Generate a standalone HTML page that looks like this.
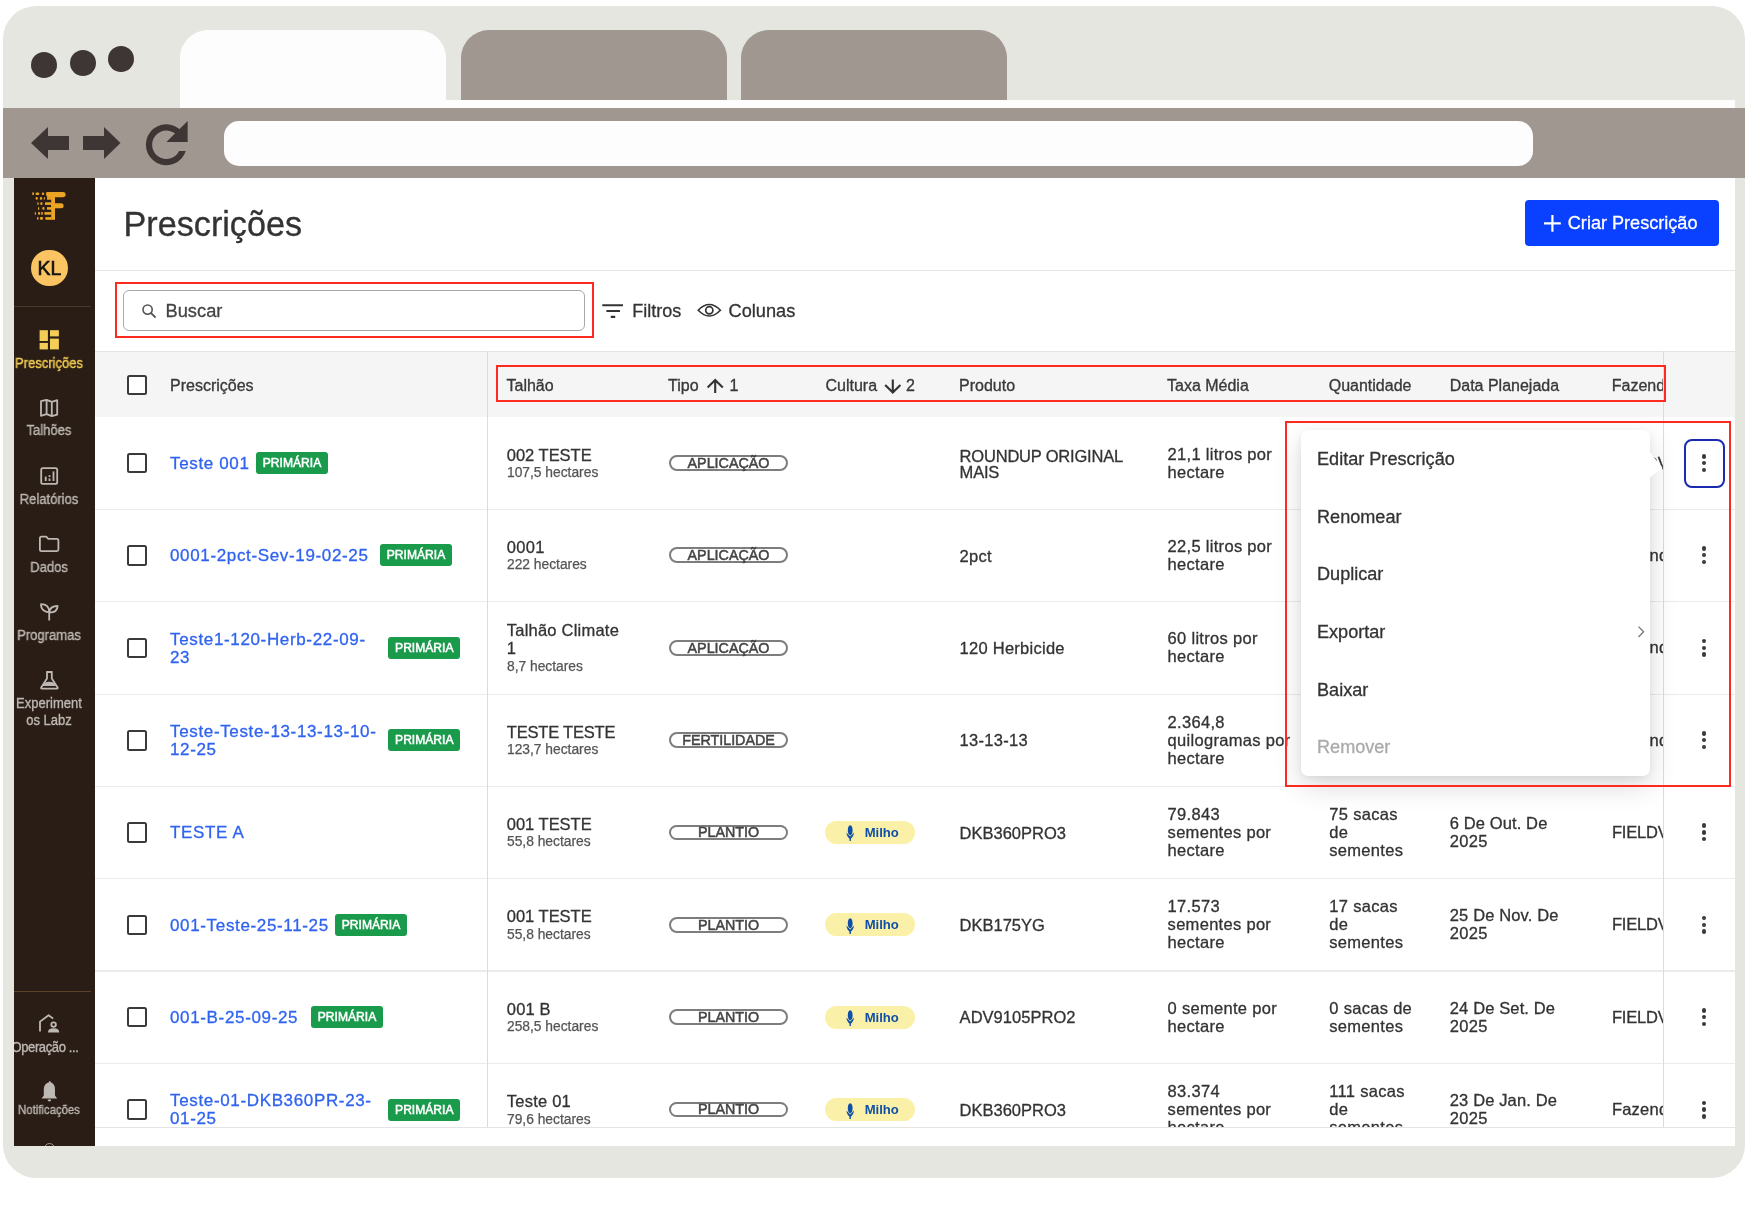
<!DOCTYPE html>
<html><head><meta charset="utf-8">
<style>
*{box-sizing:border-box;margin:0;padding:0}
html,body{width:1748px;height:1206px;overflow:hidden;background:#fff}
body{position:relative;font-family:"Liberation Sans",sans-serif;color:#333}
.a{position:absolute}
.frame{left:3px;top:6px;width:1742px;height:1172px;background:#e6e6e0;border-radius:33px}
.dot{width:26px;height:26px;border-radius:50%;background:#3e3535}
.tab{top:30px;width:266px;height:70px;background:#a19791;border-radius:28px 28px 0 0}
.toolbar{left:3px;top:108px;width:1742px;height:70px;background:#a19791}
.addr{left:224px;top:120.5px;width:1309px;height:45px;background:#fdfdfd;border-radius:15px}
.side{left:14px;top:178px;width:81px;height:968px;background:#2a1d15}
.main{left:95px;top:178px;width:1640px;height:968px;background:#fff}
.t{position:absolute;white-space:nowrap}
.red{position:absolute;border:2.2px solid #ff2a1f}
.cb{position:absolute;width:20.5px;height:20.5px;border:2.2px solid #3a3a3a;border-radius:2.5px;background:#fff}
.badge{position:absolute;height:22px;width:72px;background:#1a9b4b;border-radius:3px;color:#fff;font-size:12.1px;line-height:22.6px;text-align:center;-webkit-text-stroke:0.5px #fff}
.pill{position:absolute;left:669px;width:119.5px;height:15.8px;border:2px solid #7d7d7d;border-radius:8px}
.milho{position:absolute;left:825.4px;width:89.3px;height:23px;background:#fbf0a8;border-radius:12px}
.hl{position:absolute;height:1px;background:#e8e8e8}
.vl{position:absolute;width:1.3px;background:#dcdcdc}
.kb{position:absolute;width:4.4px;height:4.4px;border-radius:50%;background:#3a3a3a}
</style></head><body>
<div id="wrap" style="position:absolute;left:0;top:0;width:1748px;height:1206px;will-change:transform"><div class="a frame"></div>
<div class="a dot" style="left:30.6px;top:52px"></div>
<div class="a dot" style="left:69.6px;top:49.5px"></div>
<div class="a dot" style="left:107.7px;top:46px"></div>
<div class="a tab" style="left:180px;height:78px;background:#fdfdfd"></div>
<div class="a tab" style="left:461px"></div>
<div class="a tab" style="left:741px"></div>
<div class="a" style="left:180px;top:100px;width:1555px;height:78px;background:#fdfdfd"></div>
<div class="a toolbar"></div>
<svg class="a" style="left:0;top:100px" width="220" height="80" viewBox="0 100 220 80">
  <path d="M31 143 L48 127 L48 136 L69 136 L69 150 L48 150 L48 159 Z" fill="#3e3535"/>
  <path d="M120.5 143 L104 127 L104 136 L83 136 L83 150 L104 150 L104 159 Z" fill="#3e3535"/>
  <path d="M185.8 151 A20.45 20.45 0 1 1 182.0 131.6 L177.27 135.59 A14.25 14.25 0 1 0 179.15 151 Z" fill="#3e3535"/>
  <path d="M166.4 141.9 L187.65 120.9 L187.65 141.9 Z" fill="#3e3535"/>
</svg>
<div class="a addr"></div>
<div class="a side"></div>
<svg class="a" style="left:0;top:0" width="100" height="240" viewBox="0 0 100 240">
<g fill="#eba424">
<rect x="51.2" y="192" width="3.8" height="27.8"/>
<rect x="46.2" y="192" width="19.4" height="5.2" rx="2.6"/>
<rect x="51.2" y="203.2" width="12.4" height="5" rx="2.5"/>
<rect x="46.2" y="192.2" width="6" height="2.8"/>
<rect x="32.3" y="192.4" width="1.6" height="2.6"/>
<rect x="35.6" y="192.4" width="3.6" height="2.6" rx="1"/>
<rect x="41.8" y="192.4" width="2.4" height="2.6" rx="1"/>
<rect x="35.6" y="197.1" width="2.2" height="2.6" rx="1"/>
<rect x="39.8" y="197.1" width="2.4" height="2.6" rx="1"/>
<rect x="43.8" y="197.3" width="1.2" height="2.2"/>
<rect x="47" y="197.1" width="5" height="2.6"/>
<rect x="37.4" y="202.3" width="1.2" height="2.6"/>
<rect x="40.3" y="202.3" width="2.2" height="2.6" rx="1"/>
<rect x="45" y="202.3" width="7" height="2.6"/>
<rect x="38" y="207.3" width="1.2" height="2.4"/>
<rect x="42.3" y="207.1" width="2.2" height="2.6" rx="1"/>
<rect x="47" y="207.1" width="5" height="2.6"/>
<rect x="34.8" y="212.3" width="1.2" height="2.4"/>
<rect x="38" y="212.1" width="2.2" height="2.6" rx="1"/>
<rect x="41.2" y="212.1" width="1.6" height="2.6"/>
<rect x="44.4" y="212.1" width="7" height="2.6"/>
<rect x="37" y="217.1" width="1.6" height="2.6" rx="0.8"/>
<rect x="40" y="217.1" width="3" height="2.6" rx="1"/>
<rect x="45.4" y="217.1" width="6" height="2.7"/>
</g></svg>
<div class="a" style="left:30.9px;top:249.6px;width:36.8px;height:36.8px;border-radius:50%;background:#fbc462"></div>
<div class="t" style="left:-250.70px;width:600px;text-align:center;top:259.09px;font-size:19.5px;line-height:19.5px;color:#111;font-weight:normal;-webkit-text-stroke:0.6px #111;">KL</div>
<div class="a" style="left:14px;top:306.3px;width:77px;height:1.2px;background:#4a3829"></div>
<div class="a" style="left:14px;top:990.8px;width:77px;height:1.2px;background:#5e412a"></div>
<svg class="a" style="left:0;top:0" width="100" height="1150" viewBox="0 0 100 1150">
<g fill="#f3cd55">
<rect x="39.6" y="330.2" width="8.3" height="10.8"/>
<rect x="39.6" y="342.9" width="8.3" height="6.5"/>
<rect x="50" y="330.2" width="8.9" height="6.2"/>
<rect x="50" y="338.6" width="8.9" height="10.8"/>
</g>
<g fill="none" stroke="#bdb8b3" stroke-width="1.8" stroke-linejoin="round">
<path d="M41 401.2 L46.6 399.8 L51.8 401.8 L57.2 400.2 L57.2 414.6 L51.8 416.2 L46.6 414.2 L41 415.8 Z M46.6 399.8 L46.6 414.2 M51.8 401.8 L51.8 416.2"/>
<rect x="41.2" y="468.1" width="16" height="15.7" rx="1.6"/>
<path d="M39.9 549.2 V538.3 Q39.9 536.7 41.5 536.7 H46.2 L48.3 538.9 H56.8 Q58.4 538.9 58.4 540.5 V549.6 Q58.4 551.1 56.8 551.1 H41.5 Q39.9 551.1 39.9 549.5 Z"/>
<path d="M49.2 620.6 V612.2 M49.2 612.2 C46.8 612.2 41 611 41 604.2 C45.6 604.2 49.2 606.2 49.2 612.2 M49.2 612.6 C49.6 608 52.6 606 57.6 606 C57.6 610.4 54.2 612.6 49.2 612.6"/>
<path d="M46.2 672 H52.6 M47 672 V678.6 L41.2 687.4 Q40.6 688.6 42 688.6 H56.8 Q58.2 688.6 57.6 687.4 L51.8 678.6 V672"/>
<path d="M40 1031.6 V1021.6 L48.6 1015.2 L53.2 1018.6"/>
<circle cx="53.6" cy="1024.6" r="2.3"/>
</g>
<g fill="#bdb8b3">
<rect x="44.8" y="476.6" width="1.8" height="4.4"/>
<rect x="48.6" y="475.2" width="1.8" height="1.8"/><rect x="48.6" y="478.4" width="1.8" height="2.6"/>
<rect x="52.6" y="471.4" width="1.8" height="9.6"/>
<path d="M44.4 683 Q49.2 680.4 54.2 683 L56 686 H42.4 Z"/>
<path d="M48 1032.4 Q48 1028.2 53.6 1028.2 Q59.2 1028.2 59.2 1032.4 Z"/>
<path d="M49 1082.2 Q49 1081 49.8 1081 Q50.6 1081 50.6 1082.2 Q55 1083.4 55 1089.6 V1095.6 L57.2 1098.4 H41.6 L43.8 1095.6 V1089.6 Q43.8 1083.4 49 1082.2 Z"/>
<path d="M47.6 1099.4 H51.2 Q51.2 1101.4 49.4 1101.4 Q47.6 1101.4 47.6 1099.4 Z"/>
</g>
</svg>
<div class="a" style="left:14px;top:1130px;width:81px;height:16px;overflow:hidden"><div class="a" style="left:29.5px;top:13.2px;width:11px;height:11px;border-radius:50%;border:1.3px solid #9d9892"></div></div>
<div class="t" style="left:-250.70px;width:600px;text-align:center;top:355.95px;font-size:14px;line-height:14px;color:#f3cd55;font-weight:normal;transform:scaleX(0.93);-webkit-text-stroke:0.35px currentColor;">Prescrições</div>
<div class="t" style="left:-250.70px;width:600px;text-align:center;top:423.45px;font-size:14px;line-height:14px;color:#bdb8b3;font-weight:normal;transform:scaleX(0.93);-webkit-text-stroke:0.35px currentColor;">Talhões</div>
<div class="t" style="left:-250.70px;width:600px;text-align:center;top:491.85px;font-size:14px;line-height:14px;color:#bdb8b3;font-weight:normal;transform:scaleX(0.93);-webkit-text-stroke:0.35px currentColor;">Relatórios</div>
<div class="t" style="left:-250.70px;width:600px;text-align:center;top:559.75px;font-size:14px;line-height:14px;color:#bdb8b3;font-weight:normal;transform:scaleX(0.93);-webkit-text-stroke:0.35px currentColor;">Dados</div>
<div class="t" style="left:-250.70px;width:600px;text-align:center;top:627.95px;font-size:14px;line-height:14px;color:#bdb8b3;font-weight:normal;transform:scaleX(0.93);-webkit-text-stroke:0.35px currentColor;">Programas</div>
<div class="t" style="left:-250.70px;width:600px;text-align:center;top:696.05px;font-size:14px;line-height:14px;color:#bdb8b3;font-weight:normal;transform:scaleX(0.93);-webkit-text-stroke:0.35px currentColor;">Experiment</div>
<div class="t" style="left:-250.70px;width:600px;text-align:center;top:713.15px;font-size:14px;line-height:14px;color:#bdb8b3;font-weight:normal;transform:scaleX(0.93);-webkit-text-stroke:0.35px currentColor;">os Labz</div>
<div class="a" style="left:14px;top:1030px;width:81px;height:40px;overflow:hidden">
<div class="t" style="left:-269.00px;width:600px;text-align:center;top:10.15px;font-size:14px;line-height:14px;color:#bdb8b3;font-weight:normal;letter-spacing:-0.4px;transform:scaleX(0.93);-webkit-text-stroke:0.35px currentColor;">Operação ...</div>
</div>
<div class="t" style="left:-250.70px;width:600px;text-align:center;top:1104.37px;font-size:12.2px;line-height:12.2px;color:#bdb8b3;font-weight:normal;transform:scaleX(0.93);-webkit-text-stroke:0.35px currentColor;">Notificações</div>
<div class="a main"></div>
<div class="t" style="left:123.50px;top:206.85px;font-size:34.2px;line-height:34.2px;color:#333;font-weight:normal;-webkit-text-stroke:0.35px #333;">Prescrições</div>
<div class="a" style="left:1524.5px;top:200.2px;width:194px;height:45.6px;background:#0a40ff;border-radius:4px"></div>
<svg class="a" style="left:1540px;top:211px" width="26" height="26" viewBox="0 0 26 26"><path d="M12.4 4 V20.7 M4 12.4 H20.8" stroke="#fff" stroke-width="2.2"/></svg>
<div class="t" style="left:1567.80px;top:214.48px;font-size:18.1px;line-height:18.1px;color:#fff;font-weight:normal;-webkit-text-stroke:0.3px #fff;">Criar Prescrição</div>
<div class="a hl" style="left:95px;top:269.5px;width:1640px;height:1.5px;background:#e6e6e6"></div>
<div class="red" style="left:115px;top:282px;width:479px;height:56px"></div>
<div class="a" style="left:123px;top:290.4px;width:462px;height:40.8px;border:1.5px solid #a9a9a9;border-radius:6px"></div>
<svg class="a" style="left:138px;top:300px" width="22" height="22" viewBox="0 0 22 22"><circle cx="9.6" cy="9.6" r="4.6" fill="none" stroke="#555" stroke-width="1.6"/><path d="M13 13 L17.6 17.6" stroke="#555" stroke-width="1.8"/></svg>
<div class="t" style="left:165.50px;top:301.91px;font-size:18.3px;line-height:18.3px;color:#444;font-weight:normal;-webkit-text-stroke:0.3px #444;">Buscar</div>
<svg class="a" style="left:600px;top:300px" width="28" height="22" viewBox="0 0 28 22"><path d="M2.3 5.3 H23 M6.4 11 H20 M10.8 16.9 H15.2" stroke="#333" stroke-width="2.1"/></svg>
<div class="t" style="left:632.20px;top:301.86px;font-size:18px;line-height:18px;color:#333;font-weight:normal;-webkit-text-stroke:0.3px #333;">Filtros</div>
<svg class="a" style="left:694px;top:298px" width="30" height="24" viewBox="0 0 30 24"><path d="M4.2 12.3 Q15.3 0.8 26.4 12.3 Q15.3 23.8 4.2 12.3 Z" fill="none" stroke="#333" stroke-width="1.6"/><circle cx="15.3" cy="12.3" r="3.6" fill="none" stroke="#333" stroke-width="1.7"/></svg>
<div class="t" style="left:728.50px;top:301.69px;font-size:18.2px;line-height:18.2px;color:#333;font-weight:normal;-webkit-text-stroke:0.3px #333;">Colunas</div>
<div class="a" style="left:95px;top:351px;width:1640px;height:777px;overflow:hidden">
<div class="a" style="left:0;top:0;width:1640px;height:66.30000000000001px;background:#f5f5f5;border-top:1.3px solid #e3e3e3"></div>
<div class="a hl" style="left:0;top:157.50px;width:1640px;background:#ebebeb;height:1.3px"></div>
<div class="a hl" style="left:0;top:250.10px;width:1640px;background:#ebebeb;height:1.3px"></div>
<div class="a hl" style="left:0;top:342.60px;width:1640px;background:#ebebeb;height:1.3px"></div>
<div class="a hl" style="left:0;top:434.80px;width:1640px;background:#ebebeb;height:1.3px"></div>
<div class="a hl" style="left:0;top:527.00px;width:1640px;background:#ebebeb;height:1.3px"></div>
<div class="a hl" style="left:0;top:619.40px;width:1640px;background:#ebebeb;height:1.3px"></div>
<div class="a hl" style="left:0;top:711.90px;width:1640px;background:#ebebeb;height:1.3px"></div>
<div class="a vl" style="left:392px;top:0;height:777px"></div>
<div class="a vl" style="left:1568.2px;top:0;height:777px"></div>
</div>
<div class="a" style="left:95px;top:1126.5px;width:1640px;height:1.5px;background:#e4e4e4"></div>
<div class="cb" style="left:126.6px;top:374.7px"></div>
<div class="t" style="left:170.00px;top:377.76px;font-size:16px;line-height:16px;color:#3a3a3a;font-weight:normal;-webkit-text-stroke:0.3px #333;">Prescrições</div>
<div class="t" style="left:506.50px;top:377.76px;font-size:16px;line-height:16px;color:#3a3a3a;font-weight:normal;-webkit-text-stroke:0.3px #333;">Talhão</div>
<div class="t" style="left:668.00px;top:377.76px;font-size:16px;line-height:16px;color:#3a3a3a;font-weight:normal;-webkit-text-stroke:0.3px #333;">Tipo</div>
<svg class="a" style="left:703px;top:374px" width="26" height="22" viewBox="0 0 26 22"><path d="M12.2 19 V6.4 M4.6 13.6 L12.2 6 L19.8 13.6" fill="none" stroke="#333" stroke-width="2.1"/></svg>
<div class="t" style="left:729.50px;top:377.76px;font-size:16px;line-height:16px;color:#3a3a3a;font-weight:normal;-webkit-text-stroke:0.3px #333;">1</div>
<div class="t" style="left:825.50px;top:377.76px;font-size:16px;line-height:16px;color:#3a3a3a;font-weight:normal;-webkit-text-stroke:0.3px #333;">Cultura</div>
<svg class="a" style="left:880px;top:374px" width="26" height="22" viewBox="0 0 26 22"><path d="M12.8 5.6 V18.2 M5.2 11 L12.8 18.6 L20.4 11" fill="none" stroke="#333" stroke-width="2.1"/></svg>
<div class="t" style="left:906.00px;top:377.76px;font-size:16px;line-height:16px;color:#3a3a3a;font-weight:normal;-webkit-text-stroke:0.3px #333;">2</div>
<div class="t" style="left:959.00px;top:377.76px;font-size:16px;line-height:16px;color:#3a3a3a;font-weight:normal;-webkit-text-stroke:0.3px #333;">Produto</div>
<div class="t" style="left:1167.00px;top:377.76px;font-size:16px;line-height:16px;color:#3a3a3a;font-weight:normal;-webkit-text-stroke:0.3px #333;">Taxa Média</div>
<div class="t" style="left:1328.70px;top:377.76px;font-size:16px;line-height:16px;color:#3a3a3a;font-weight:normal;-webkit-text-stroke:0.3px #333;">Quantidade</div>
<div class="t" style="left:1449.70px;top:377.76px;font-size:16px;line-height:16px;color:#3a3a3a;font-weight:normal;-webkit-text-stroke:0.3px #333;">Data Planejada</div>
<div class="a" style="left:1600px;top:360px;width:63.2px;height:50px;overflow:hidden">
<div class="t" style="left:11.80px;top:17.76px;font-size:16px;line-height:16px;color:#3a3a3a;font-weight:normal;-webkit-text-stroke:0.3px #333;">Fazenda</div>
</div>
<div class="a" style="left:95px;top:417px;width:1640px;height:710px;overflow:hidden">
<div class="cb" style="left:31.799999999999997px;top:35.95px"></div>
<div class="t" style="left:75.00px;top:38.06px;font-size:17.0px;line-height:17.0px;color:#2f63f0;font-weight:normal;letter-spacing:0.65px;-webkit-text-stroke:0.3px #2f63f0;">Teste 001</div>
<div class="badge" style="left:161px;top:35.15px">PRIMÁRIA</div>
<div class="t" style="left:411.80px;top:29.58px;font-size:16.5px;line-height:16.5px;color:#333333;font-weight:normal;letter-spacing:-0.013px;-webkit-text-stroke:0.3px #333;">002 TESTE</div>
<div class="t" style="left:412.00px;top:49.17px;font-size:13.8px;line-height:13.8px;color:#555;font-weight:normal;-webkit-text-stroke:0.25px #555;">107,5 hectares</div>
<div class="pill" style="left:573.8px;top:38.25px"></div>
<div class="t" style="left:333.50px;width:600px;text-align:center;top:39.05px;font-size:14.3px;line-height:14.3px;color:#444;font-weight:normal;-webkit-text-stroke:0.5px #444;">APLICAÇÃO</div>
<div class="t" style="left:864.60px;top:30.53px;font-size:16.5px;line-height:16.5px;color:#333333;font-weight:normal;letter-spacing:-0.2px;-webkit-text-stroke:0.3px #333;">ROUNDUP ORIGINAL</div>
<div class="t" style="left:864.60px;top:46.53px;font-size:16.5px;line-height:16.5px;color:#333333;font-weight:normal;letter-spacing:-0.2px;-webkit-text-stroke:0.3px #333;">MAIS</div>
<div class="t" style="left:1072.60px;top:28.78px;font-size:16.5px;line-height:16.5px;color:#333333;font-weight:normal;letter-spacing:0.3px;-webkit-text-stroke:0.3px #333;">21,1 litros por</div>
<div class="t" style="left:1072.60px;top:46.78px;font-size:16.5px;line-height:16.5px;color:#333333;font-weight:normal;letter-spacing:0.3px;-webkit-text-stroke:0.3px #333;">hectare</div>
<div class="t" style="left:1234.30px;top:28.78px;font-size:16.5px;line-height:16.5px;color:#333333;font-weight:normal;letter-spacing:0.3px;-webkit-text-stroke:0.3px #333;">21 litros por</div>
<div class="t" style="left:1234.30px;top:46.78px;font-size:16.5px;line-height:16.5px;color:#333333;font-weight:normal;letter-spacing:0.3px;-webkit-text-stroke:0.3px #333;">hectare</div>
<div class="t" style="left:1354.80px;top:28.78px;font-size:16.5px;line-height:16.5px;color:#333333;font-weight:normal;letter-spacing:0.133px;-webkit-text-stroke:0.3px #333;">15 De Set. De</div>
<div class="t" style="left:1354.80px;top:46.78px;font-size:16.5px;line-height:16.5px;color:#333333;font-weight:normal;letter-spacing:0.3px;-webkit-text-stroke:0.3px #333;">2025</div>
<div class="a" style="left:1505px;top:31.15px;width:63.3px;height:30px;overflow:hidden">
<div class="t" style="left:11.90px;top:6.63px;font-size:16.5px;line-height:16.5px;color:#333333;font-weight:normal;letter-spacing:-0.2px;-webkit-text-stroke:0.3px #333;">FIELDVIEW</div>
</div>
<div class="kb" style="left:1607.1px;top:37.15px"></div>
<div class="kb" style="left:1607.1px;top:43.95px"></div>
<div class="kb" style="left:1607.1px;top:50.75px"></div>
<div class="cb" style="left:31.799999999999997px;top:128.10px"></div>
<div class="t" style="left:75.00px;top:130.21px;font-size:17.0px;line-height:17.0px;color:#2f63f0;font-weight:normal;letter-spacing:0.65px;-webkit-text-stroke:0.3px #2f63f0;">0001-2pct-Sev-19-02-25</div>
<div class="badge" style="left:285px;top:127.30px">PRIMÁRIA</div>
<div class="t" style="left:411.80px;top:121.73px;font-size:16.5px;line-height:16.5px;color:#333333;font-weight:normal;letter-spacing:0.3px;-webkit-text-stroke:0.3px #333;">0001</div>
<div class="t" style="left:412.00px;top:141.32px;font-size:13.8px;line-height:13.8px;color:#555;font-weight:normal;-webkit-text-stroke:0.25px #555;">222 hectares</div>
<div class="pill" style="left:573.8px;top:130.40px"></div>
<div class="t" style="left:333.50px;width:600px;text-align:center;top:131.20px;font-size:14.3px;line-height:14.3px;color:#444;font-weight:normal;-webkit-text-stroke:0.5px #444;">APLICAÇÃO</div>
<div class="t" style="left:864.60px;top:130.53px;font-size:16.5px;line-height:16.5px;color:#333333;font-weight:normal;letter-spacing:0.3px;-webkit-text-stroke:0.3px #333;">2pct</div>
<div class="t" style="left:1072.60px;top:120.93px;font-size:16.5px;line-height:16.5px;color:#333333;font-weight:normal;letter-spacing:0.3px;-webkit-text-stroke:0.3px #333;">22,5 litros por</div>
<div class="t" style="left:1072.60px;top:138.93px;font-size:16.5px;line-height:16.5px;color:#333333;font-weight:normal;letter-spacing:0.3px;-webkit-text-stroke:0.3px #333;">hectare</div>
<div class="t" style="left:1234.30px;top:129.93px;font-size:16.5px;line-height:16.5px;color:#333333;font-weight:normal;letter-spacing:0.3px;-webkit-text-stroke:0.3px #333;">22 litros</div>
<div class="t" style="left:1354.80px;top:120.93px;font-size:16.5px;line-height:16.5px;color:#333333;font-weight:normal;letter-spacing:0.133px;-webkit-text-stroke:0.3px #333;">19 De Fev. De</div>
<div class="t" style="left:1354.80px;top:138.93px;font-size:16.5px;line-height:16.5px;color:#333333;font-weight:normal;letter-spacing:0.3px;-webkit-text-stroke:0.3px #333;">2025</div>
<div class="a" style="left:1505px;top:123.30px;width:63.3px;height:30px;overflow:hidden">
<div class="t" style="left:11.90px;top:6.63px;font-size:16.5px;line-height:16.5px;color:#333333;font-weight:normal;letter-spacing:0.229px;-webkit-text-stroke:0.3px #333;">Fazenda</div>
</div>
<div class="kb" style="left:1607.1px;top:129.30px"></div>
<div class="kb" style="left:1607.1px;top:136.10px"></div>
<div class="kb" style="left:1607.1px;top:142.90px"></div>
<div class="cb" style="left:31.799999999999997px;top:220.65px"></div>
<div class="t" style="left:75.00px;top:213.76px;font-size:17.0px;line-height:17.0px;color:#2f63f0;font-weight:normal;letter-spacing:0.65px;-webkit-text-stroke:0.3px #2f63f0;">Teste1-120-Herb-22-09-</div>
<div class="t" style="left:75.00px;top:231.76px;font-size:17.0px;line-height:17.0px;color:#2f63f0;font-weight:normal;letter-spacing:0.65px;-webkit-text-stroke:0.3px #2f63f0;">23</div>
<div class="badge" style="left:293.3px;top:219.85px">PRIMÁRIA</div>
<div class="t" style="left:411.80px;top:205.28px;font-size:16.5px;line-height:16.5px;color:#333333;font-weight:normal;letter-spacing:0.223px;-webkit-text-stroke:0.3px #333;">Talhão Climate</div>
<div class="t" style="left:411.80px;top:223.28px;font-size:16.5px;line-height:16.5px;color:#333333;font-weight:normal;letter-spacing:0.3px;-webkit-text-stroke:0.3px #333;">1</div>
<div class="t" style="left:412.00px;top:242.87px;font-size:13.8px;line-height:13.8px;color:#555;font-weight:normal;-webkit-text-stroke:0.25px #555;">8,7 hectares</div>
<div class="pill" style="left:573.8px;top:222.95px"></div>
<div class="t" style="left:333.50px;width:600px;text-align:center;top:223.75px;font-size:14.3px;line-height:14.3px;color:#444;font-weight:normal;-webkit-text-stroke:0.5px #444;">APLICAÇÃO</div>
<div class="t" style="left:864.60px;top:223.08px;font-size:16.5px;line-height:16.5px;color:#333333;font-weight:normal;letter-spacing:0.258px;-webkit-text-stroke:0.3px #333;">120 Herbicide</div>
<div class="t" style="left:1072.60px;top:213.48px;font-size:16.5px;line-height:16.5px;color:#333333;font-weight:normal;letter-spacing:0.3px;-webkit-text-stroke:0.3px #333;">60 litros por</div>
<div class="t" style="left:1072.60px;top:231.48px;font-size:16.5px;line-height:16.5px;color:#333333;font-weight:normal;letter-spacing:0.3px;-webkit-text-stroke:0.3px #333;">hectare</div>
<div class="t" style="left:1234.30px;top:222.48px;font-size:16.5px;line-height:16.5px;color:#333333;font-weight:normal;letter-spacing:0.3px;-webkit-text-stroke:0.3px #333;">60 litros</div>
<div class="t" style="left:1354.80px;top:213.48px;font-size:16.5px;line-height:16.5px;color:#333333;font-weight:normal;letter-spacing:0.133px;-webkit-text-stroke:0.3px #333;">22 De Set. De</div>
<div class="t" style="left:1354.80px;top:231.48px;font-size:16.5px;line-height:16.5px;color:#333333;font-weight:normal;letter-spacing:0.3px;-webkit-text-stroke:0.3px #333;">2023</div>
<div class="a" style="left:1505px;top:215.85px;width:63.3px;height:30px;overflow:hidden">
<div class="t" style="left:11.90px;top:6.63px;font-size:16.5px;line-height:16.5px;color:#333333;font-weight:normal;letter-spacing:0.229px;-webkit-text-stroke:0.3px #333;">Fazenda</div>
</div>
<div class="kb" style="left:1607.1px;top:221.85px"></div>
<div class="kb" style="left:1607.1px;top:228.65px"></div>
<div class="kb" style="left:1607.1px;top:235.45px"></div>
<div class="cb" style="left:31.799999999999997px;top:313.00px"></div>
<div class="t" style="left:75.00px;top:306.11px;font-size:17.0px;line-height:17.0px;color:#2f63f0;font-weight:normal;letter-spacing:0.65px;-webkit-text-stroke:0.3px #2f63f0;">Teste-Teste-13-13-13-10-</div>
<div class="t" style="left:75.00px;top:324.11px;font-size:17.0px;line-height:17.0px;color:#2f63f0;font-weight:normal;letter-spacing:0.65px;-webkit-text-stroke:0.3px #2f63f0;">12-25</div>
<div class="badge" style="left:293.3px;top:312.20px">PRIMÁRIA</div>
<div class="t" style="left:411.80px;top:306.63px;font-size:16.5px;line-height:16.5px;color:#333333;font-weight:normal;letter-spacing:-0.2px;-webkit-text-stroke:0.3px #333;">TESTE TESTE</div>
<div class="t" style="left:412.00px;top:326.22px;font-size:13.8px;line-height:13.8px;color:#555;font-weight:normal;-webkit-text-stroke:0.25px #555;">123,7 hectares</div>
<div class="pill" style="left:573.8px;top:315.30px"></div>
<div class="t" style="left:333.50px;width:600px;text-align:center;top:316.10px;font-size:14.3px;line-height:14.3px;color:#444;font-weight:normal;-webkit-text-stroke:0.5px #444;">FERTILIDADE</div>
<div class="t" style="left:864.60px;top:315.43px;font-size:16.5px;line-height:16.5px;color:#333333;font-weight:normal;letter-spacing:0.3px;-webkit-text-stroke:0.3px #333;">13-13-13</div>
<div class="t" style="left:1072.60px;top:296.83px;font-size:16.5px;line-height:16.5px;color:#333333;font-weight:normal;letter-spacing:0.3px;-webkit-text-stroke:0.3px #333;">2.364,8</div>
<div class="t" style="left:1072.60px;top:314.83px;font-size:16.5px;line-height:16.5px;color:#333333;font-weight:normal;letter-spacing:0.3px;-webkit-text-stroke:0.3px #333;">quilogramas por</div>
<div class="t" style="left:1072.60px;top:332.83px;font-size:16.5px;line-height:16.5px;color:#333333;font-weight:normal;letter-spacing:0.3px;-webkit-text-stroke:0.3px #333;">hectare</div>
<div class="t" style="left:1234.30px;top:314.83px;font-size:16.5px;line-height:16.5px;color:#333333;font-weight:normal;letter-spacing:0.3px;-webkit-text-stroke:0.3px #333;">2.364 kg</div>
<div class="t" style="left:1354.80px;top:305.83px;font-size:16.5px;line-height:16.5px;color:#333333;font-weight:normal;letter-spacing:0.133px;-webkit-text-stroke:0.3px #333;">10 De Dez. De</div>
<div class="t" style="left:1354.80px;top:323.83px;font-size:16.5px;line-height:16.5px;color:#333333;font-weight:normal;letter-spacing:0.3px;-webkit-text-stroke:0.3px #333;">2025</div>
<div class="a" style="left:1505px;top:308.20px;width:63.3px;height:30px;overflow:hidden">
<div class="t" style="left:11.90px;top:6.63px;font-size:16.5px;line-height:16.5px;color:#333333;font-weight:normal;letter-spacing:0.229px;-webkit-text-stroke:0.3px #333;">Fazenda</div>
</div>
<div class="kb" style="left:1607.1px;top:314.20px"></div>
<div class="kb" style="left:1607.1px;top:321.00px"></div>
<div class="kb" style="left:1607.1px;top:327.80px"></div>
<div class="cb" style="left:31.799999999999997px;top:405.20px"></div>
<div class="t" style="left:75.00px;top:407.31px;font-size:17.0px;line-height:17.0px;color:#2f63f0;font-weight:normal;letter-spacing:0.65px;-webkit-text-stroke:0.3px #2f63f0;">TESTE A</div>
<div class="t" style="left:411.80px;top:398.83px;font-size:16.5px;line-height:16.5px;color:#333333;font-weight:normal;letter-spacing:-0.013px;-webkit-text-stroke:0.3px #333;">001 TESTE</div>
<div class="t" style="left:412.00px;top:418.42px;font-size:13.8px;line-height:13.8px;color:#555;font-weight:normal;-webkit-text-stroke:0.25px #555;">55,8 hectares</div>
<div class="pill" style="left:573.8px;top:407.50px"></div>
<div class="t" style="left:333.50px;width:600px;text-align:center;top:408.30px;font-size:14.3px;line-height:14.3px;color:#444;font-weight:normal;-webkit-text-stroke:0.5px #444;">PLANTIO</div>
<div class="milho" style="left:730.4px;top:403.90px"></div>
<svg class="a" style="left:745px;top:400.40px" width="20" height="30" viewBox="0 0 20 30"><path d="M10.2 8.2 Q12.6 8.6 12.6 13.6 Q12.6 17.4 10.2 18.6 Q7.8 17.4 7.8 13.6 Q7.8 8.6 10.2 8.2 Z" fill="#0f4fa8"/><path d="M6.4 15.6 Q7 20.6 10.2 22 Q13.4 20.6 14 15.6 Q12.2 17.6 10.2 19.6 Q8.2 17.6 6.4 15.6 Z" fill="#0f4fa8"/><rect x="9.5" y="21" width="1.4" height="3" fill="#0f4fa8"/></svg>
<div class="t" style="left:769.70px;top:408.81px;font-size:13.1px;line-height:13.1px;color:#0f4fa8;font-weight:bold;">Milho</div>
<div class="t" style="left:864.60px;top:407.63px;font-size:16.5px;line-height:16.5px;color:#333333;font-weight:normal;-webkit-text-stroke:0.3px #333;">DKB360PRO3</div>
<div class="t" style="left:1072.60px;top:389.03px;font-size:16.5px;line-height:16.5px;color:#333333;font-weight:normal;letter-spacing:0.3px;-webkit-text-stroke:0.3px #333;">79.843</div>
<div class="t" style="left:1072.60px;top:407.03px;font-size:16.5px;line-height:16.5px;color:#333333;font-weight:normal;letter-spacing:0.3px;-webkit-text-stroke:0.3px #333;">sementes por</div>
<div class="t" style="left:1072.60px;top:425.03px;font-size:16.5px;line-height:16.5px;color:#333333;font-weight:normal;letter-spacing:0.3px;-webkit-text-stroke:0.3px #333;">hectare</div>
<div class="t" style="left:1234.30px;top:389.03px;font-size:16.5px;line-height:16.5px;color:#333333;font-weight:normal;letter-spacing:0.3px;-webkit-text-stroke:0.3px #333;">75 sacas</div>
<div class="t" style="left:1234.30px;top:407.03px;font-size:16.5px;line-height:16.5px;color:#333333;font-weight:normal;letter-spacing:0.3px;-webkit-text-stroke:0.3px #333;">de</div>
<div class="t" style="left:1234.30px;top:425.03px;font-size:16.5px;line-height:16.5px;color:#333333;font-weight:normal;letter-spacing:0.3px;-webkit-text-stroke:0.3px #333;">sementes</div>
<div class="t" style="left:1354.80px;top:398.03px;font-size:16.5px;line-height:16.5px;color:#333333;font-weight:normal;letter-spacing:0.112px;-webkit-text-stroke:0.3px #333;">6 De Out. De</div>
<div class="t" style="left:1354.80px;top:416.03px;font-size:16.5px;line-height:16.5px;color:#333333;font-weight:normal;letter-spacing:0.3px;-webkit-text-stroke:0.3px #333;">2025</div>
<div class="a" style="left:1505px;top:400.40px;width:63.3px;height:30px;overflow:hidden">
<div class="t" style="left:11.90px;top:6.63px;font-size:16.5px;line-height:16.5px;color:#333333;font-weight:normal;letter-spacing:-0.2px;-webkit-text-stroke:0.3px #333;">FIELDVIEW</div>
</div>
<div class="kb" style="left:1607.1px;top:406.40px"></div>
<div class="kb" style="left:1607.1px;top:413.20px"></div>
<div class="kb" style="left:1607.1px;top:420.00px"></div>
<div class="cb" style="left:31.799999999999997px;top:497.50px"></div>
<div class="t" style="left:75.00px;top:499.61px;font-size:17.0px;line-height:17.0px;color:#2f63f0;font-weight:normal;letter-spacing:0.65px;-webkit-text-stroke:0.3px #2f63f0;">001-Teste-25-11-25</div>
<div class="badge" style="left:240px;top:496.70px">PRIMÁRIA</div>
<div class="t" style="left:411.80px;top:491.13px;font-size:16.5px;line-height:16.5px;color:#333333;font-weight:normal;letter-spacing:-0.013px;-webkit-text-stroke:0.3px #333;">001 TESTE</div>
<div class="t" style="left:412.00px;top:510.72px;font-size:13.8px;line-height:13.8px;color:#555;font-weight:normal;-webkit-text-stroke:0.25px #555;">55,8 hectares</div>
<div class="pill" style="left:573.8px;top:499.80px"></div>
<div class="t" style="left:333.50px;width:600px;text-align:center;top:500.60px;font-size:14.3px;line-height:14.3px;color:#444;font-weight:normal;-webkit-text-stroke:0.5px #444;">PLANTIO</div>
<div class="milho" style="left:730.4px;top:496.20px"></div>
<svg class="a" style="left:745px;top:492.70px" width="20" height="30" viewBox="0 0 20 30"><path d="M10.2 8.2 Q12.6 8.6 12.6 13.6 Q12.6 17.4 10.2 18.6 Q7.8 17.4 7.8 13.6 Q7.8 8.6 10.2 8.2 Z" fill="#0f4fa8"/><path d="M6.4 15.6 Q7 20.6 10.2 22 Q13.4 20.6 14 15.6 Q12.2 17.6 10.2 19.6 Q8.2 17.6 6.4 15.6 Z" fill="#0f4fa8"/><rect x="9.5" y="21" width="1.4" height="3" fill="#0f4fa8"/></svg>
<div class="t" style="left:769.70px;top:501.11px;font-size:13.1px;line-height:13.1px;color:#0f4fa8;font-weight:bold;">Milho</div>
<div class="t" style="left:864.60px;top:499.93px;font-size:16.5px;line-height:16.5px;color:#333333;font-weight:normal;letter-spacing:-0.013px;-webkit-text-stroke:0.3px #333;">DKB175YG</div>
<div class="t" style="left:1072.60px;top:481.33px;font-size:16.5px;line-height:16.5px;color:#333333;font-weight:normal;letter-spacing:0.3px;-webkit-text-stroke:0.3px #333;">17.573</div>
<div class="t" style="left:1072.60px;top:499.33px;font-size:16.5px;line-height:16.5px;color:#333333;font-weight:normal;letter-spacing:0.3px;-webkit-text-stroke:0.3px #333;">sementes por</div>
<div class="t" style="left:1072.60px;top:517.33px;font-size:16.5px;line-height:16.5px;color:#333333;font-weight:normal;letter-spacing:0.3px;-webkit-text-stroke:0.3px #333;">hectare</div>
<div class="t" style="left:1234.30px;top:481.33px;font-size:16.5px;line-height:16.5px;color:#333333;font-weight:normal;letter-spacing:0.3px;-webkit-text-stroke:0.3px #333;">17 sacas</div>
<div class="t" style="left:1234.30px;top:499.33px;font-size:16.5px;line-height:16.5px;color:#333333;font-weight:normal;letter-spacing:0.3px;-webkit-text-stroke:0.3px #333;">de</div>
<div class="t" style="left:1234.30px;top:517.33px;font-size:16.5px;line-height:16.5px;color:#333333;font-weight:normal;letter-spacing:0.3px;-webkit-text-stroke:0.3px #333;">sementes</div>
<div class="t" style="left:1354.80px;top:490.33px;font-size:16.5px;line-height:16.5px;color:#333333;font-weight:normal;letter-spacing:0.133px;-webkit-text-stroke:0.3px #333;">25 De Nov. De</div>
<div class="t" style="left:1354.80px;top:508.33px;font-size:16.5px;line-height:16.5px;color:#333333;font-weight:normal;letter-spacing:0.3px;-webkit-text-stroke:0.3px #333;">2025</div>
<div class="a" style="left:1505px;top:492.70px;width:63.3px;height:30px;overflow:hidden">
<div class="t" style="left:11.90px;top:6.63px;font-size:16.5px;line-height:16.5px;color:#333333;font-weight:normal;letter-spacing:-0.2px;-webkit-text-stroke:0.3px #333;">FIELDVIEW</div>
</div>
<div class="kb" style="left:1607.1px;top:498.70px"></div>
<div class="kb" style="left:1607.1px;top:505.50px"></div>
<div class="kb" style="left:1607.1px;top:512.30px"></div>
<div class="cb" style="left:31.799999999999997px;top:589.95px"></div>
<div class="t" style="left:75.00px;top:592.06px;font-size:17.0px;line-height:17.0px;color:#2f63f0;font-weight:normal;letter-spacing:0.65px;-webkit-text-stroke:0.3px #2f63f0;">001-B-25-09-25</div>
<div class="badge" style="left:216px;top:589.15px">PRIMÁRIA</div>
<div class="t" style="left:411.80px;top:583.58px;font-size:16.5px;line-height:16.5px;color:#333333;font-weight:normal;letter-spacing:0.175px;-webkit-text-stroke:0.3px #333;">001 B</div>
<div class="t" style="left:412.00px;top:603.17px;font-size:13.8px;line-height:13.8px;color:#555;font-weight:normal;-webkit-text-stroke:0.25px #555;">258,5 hectares</div>
<div class="pill" style="left:573.8px;top:592.25px"></div>
<div class="t" style="left:333.50px;width:600px;text-align:center;top:593.05px;font-size:14.3px;line-height:14.3px;color:#444;font-weight:normal;-webkit-text-stroke:0.5px #444;">PLANTIO</div>
<div class="milho" style="left:730.4px;top:588.65px"></div>
<svg class="a" style="left:745px;top:585.15px" width="20" height="30" viewBox="0 0 20 30"><path d="M10.2 8.2 Q12.6 8.6 12.6 13.6 Q12.6 17.4 10.2 18.6 Q7.8 17.4 7.8 13.6 Q7.8 8.6 10.2 8.2 Z" fill="#0f4fa8"/><path d="M6.4 15.6 Q7 20.6 10.2 22 Q13.4 20.6 14 15.6 Q12.2 17.6 10.2 19.6 Q8.2 17.6 6.4 15.6 Z" fill="#0f4fa8"/><rect x="9.5" y="21" width="1.4" height="3" fill="#0f4fa8"/></svg>
<div class="t" style="left:769.70px;top:593.56px;font-size:13.1px;line-height:13.1px;color:#0f4fa8;font-weight:bold;">Milho</div>
<div class="t" style="left:864.60px;top:592.38px;font-size:16.5px;line-height:16.5px;color:#333333;font-weight:normal;letter-spacing:0.027px;-webkit-text-stroke:0.3px #333;">ADV9105PRO2</div>
<div class="t" style="left:1072.60px;top:582.78px;font-size:16.5px;line-height:16.5px;color:#333333;font-weight:normal;letter-spacing:0.3px;-webkit-text-stroke:0.3px #333;">0 semente por</div>
<div class="t" style="left:1072.60px;top:600.78px;font-size:16.5px;line-height:16.5px;color:#333333;font-weight:normal;letter-spacing:0.3px;-webkit-text-stroke:0.3px #333;">hectare</div>
<div class="t" style="left:1234.30px;top:582.78px;font-size:16.5px;line-height:16.5px;color:#333333;font-weight:normal;letter-spacing:0.3px;-webkit-text-stroke:0.3px #333;">0 sacas de</div>
<div class="t" style="left:1234.30px;top:600.78px;font-size:16.5px;line-height:16.5px;color:#333333;font-weight:normal;letter-spacing:0.3px;-webkit-text-stroke:0.3px #333;">sementes</div>
<div class="t" style="left:1354.80px;top:582.78px;font-size:16.5px;line-height:16.5px;color:#333333;font-weight:normal;letter-spacing:0.133px;-webkit-text-stroke:0.3px #333;">24 De Set. De</div>
<div class="t" style="left:1354.80px;top:600.78px;font-size:16.5px;line-height:16.5px;color:#333333;font-weight:normal;letter-spacing:0.3px;-webkit-text-stroke:0.3px #333;">2025</div>
<div class="a" style="left:1505px;top:585.15px;width:63.3px;height:30px;overflow:hidden">
<div class="t" style="left:11.90px;top:6.63px;font-size:16.5px;line-height:16.5px;color:#333333;font-weight:normal;letter-spacing:-0.2px;-webkit-text-stroke:0.3px #333;">FIELDVIEW</div>
</div>
<div class="kb" style="left:1607.1px;top:591.15px"></div>
<div class="kb" style="left:1607.1px;top:597.95px"></div>
<div class="kb" style="left:1607.1px;top:604.75px"></div>
<div class="cb" style="left:31.799999999999997px;top:682.35px"></div>
<div class="t" style="left:75.00px;top:675.46px;font-size:17.0px;line-height:17.0px;color:#2f63f0;font-weight:normal;letter-spacing:0.65px;-webkit-text-stroke:0.3px #2f63f0;">Teste-01-DKB360PR-23-</div>
<div class="t" style="left:75.00px;top:693.46px;font-size:17.0px;line-height:17.0px;color:#2f63f0;font-weight:normal;letter-spacing:0.65px;-webkit-text-stroke:0.3px #2f63f0;">01-25</div>
<div class="badge" style="left:293.3px;top:681.55px">PRIMÁRIA</div>
<div class="t" style="left:411.80px;top:675.98px;font-size:16.5px;line-height:16.5px;color:#333333;font-weight:normal;letter-spacing:0.229px;-webkit-text-stroke:0.3px #333;">Teste 01</div>
<div class="t" style="left:412.00px;top:695.57px;font-size:13.8px;line-height:13.8px;color:#555;font-weight:normal;-webkit-text-stroke:0.25px #555;">79,6 hectares</div>
<div class="pill" style="left:573.8px;top:684.65px"></div>
<div class="t" style="left:333.50px;width:600px;text-align:center;top:685.45px;font-size:14.3px;line-height:14.3px;color:#444;font-weight:normal;-webkit-text-stroke:0.5px #444;">PLANTIO</div>
<div class="milho" style="left:730.4px;top:681.05px"></div>
<svg class="a" style="left:745px;top:677.55px" width="20" height="30" viewBox="0 0 20 30"><path d="M10.2 8.2 Q12.6 8.6 12.6 13.6 Q12.6 17.4 10.2 18.6 Q7.8 17.4 7.8 13.6 Q7.8 8.6 10.2 8.2 Z" fill="#0f4fa8"/><path d="M6.4 15.6 Q7 20.6 10.2 22 Q13.4 20.6 14 15.6 Q12.2 17.6 10.2 19.6 Q8.2 17.6 6.4 15.6 Z" fill="#0f4fa8"/><rect x="9.5" y="21" width="1.4" height="3" fill="#0f4fa8"/></svg>
<div class="t" style="left:769.70px;top:685.96px;font-size:13.1px;line-height:13.1px;color:#0f4fa8;font-weight:bold;">Milho</div>
<div class="t" style="left:864.60px;top:684.78px;font-size:16.5px;line-height:16.5px;color:#333333;font-weight:normal;-webkit-text-stroke:0.3px #333;">DKB360PRO3</div>
<div class="t" style="left:1072.60px;top:666.18px;font-size:16.5px;line-height:16.5px;color:#333333;font-weight:normal;letter-spacing:0.3px;-webkit-text-stroke:0.3px #333;">83.374</div>
<div class="t" style="left:1072.60px;top:684.18px;font-size:16.5px;line-height:16.5px;color:#333333;font-weight:normal;letter-spacing:0.3px;-webkit-text-stroke:0.3px #333;">sementes por</div>
<div class="t" style="left:1072.60px;top:702.18px;font-size:16.5px;line-height:16.5px;color:#333333;font-weight:normal;letter-spacing:0.3px;-webkit-text-stroke:0.3px #333;">hectare</div>
<div class="t" style="left:1234.30px;top:666.18px;font-size:16.5px;line-height:16.5px;color:#333333;font-weight:normal;letter-spacing:0.3px;-webkit-text-stroke:0.3px #333;">111 sacas</div>
<div class="t" style="left:1234.30px;top:684.18px;font-size:16.5px;line-height:16.5px;color:#333333;font-weight:normal;letter-spacing:0.3px;-webkit-text-stroke:0.3px #333;">de</div>
<div class="t" style="left:1234.30px;top:702.18px;font-size:16.5px;line-height:16.5px;color:#333333;font-weight:normal;letter-spacing:0.3px;-webkit-text-stroke:0.3px #333;">sementes</div>
<div class="t" style="left:1354.80px;top:675.18px;font-size:16.5px;line-height:16.5px;color:#333333;font-weight:normal;letter-spacing:0.133px;-webkit-text-stroke:0.3px #333;">23 De Jan. De</div>
<div class="t" style="left:1354.80px;top:693.18px;font-size:16.5px;line-height:16.5px;color:#333333;font-weight:normal;letter-spacing:0.3px;-webkit-text-stroke:0.3px #333;">2025</div>
<div class="a" style="left:1505px;top:677.55px;width:63.3px;height:30px;overflow:hidden">
<div class="t" style="left:11.90px;top:6.63px;font-size:16.5px;line-height:16.5px;color:#333333;font-weight:normal;letter-spacing:0.229px;-webkit-text-stroke:0.3px #333;">Fazenda</div>
</div>
<div class="kb" style="left:1607.1px;top:683.55px"></div>
<div class="kb" style="left:1607.1px;top:690.35px"></div>
<div class="kb" style="left:1607.1px;top:697.15px"></div>
</div>
<div class="red" style="left:495.5px;top:364.8px;width:1170.5px;height:37px"></div>
<div class="a" style="left:1683.9px;top:438.5px;width:41.5px;height:49.3px;border:2.4px solid #1b2bb0;border-radius:8px"></div>
<div class="a" style="left:1301.4px;top:430px;width:348.6px;height:345.5px;background:#fff;border-radius:7px;box-shadow:0 10px 28px rgba(0,0,0,.15),0 2px 6px rgba(0,0,0,.06)"></div>
<svg class="a" style="left:1646px;top:450px" width="20" height="32" viewBox="0 0 20 32"><path d="M0 2.2 L4 2.6 L16.5 17.7 L4 27.6 L0 28 Z" fill="#fff"/></svg>
<div class="t" style="left:1317.00px;top:450.28px;font-size:18.1px;line-height:18.1px;color:#333;font-weight:normal;-webkit-text-stroke:0.3px #333;">Editar Prescrição</div>
<div class="t" style="left:1317.00px;top:507.88px;font-size:18.1px;line-height:18.1px;color:#333;font-weight:normal;-webkit-text-stroke:0.3px #333;">Renomear</div>
<div class="t" style="left:1317.00px;top:565.48px;font-size:18.1px;line-height:18.1px;color:#333;font-weight:normal;-webkit-text-stroke:0.3px #333;">Duplicar</div>
<div class="t" style="left:1317.00px;top:623.08px;font-size:18.1px;line-height:18.1px;color:#333;font-weight:normal;-webkit-text-stroke:0.3px #333;">Exportar</div>
<div class="t" style="left:1317.00px;top:680.68px;font-size:18.1px;line-height:18.1px;color:#333;font-weight:normal;-webkit-text-stroke:0.3px #333;">Baixar</div>
<div class="t" style="left:1317.00px;top:738.28px;font-size:18.1px;line-height:18.1px;color:#aaa;font-weight:normal;-webkit-text-stroke:0.3px #aaa;">Remover</div>
<svg class="a" style="left:1634px;top:623px" width="14" height="18" viewBox="0 0 14 18"><path d="M4.5 3.6 L9.6 8.8 L4.5 14" fill="none" stroke="#777" stroke-width="1.3"/></svg>
<div class="red" style="left:1285.4px;top:421.2px;width:446px;height:365.5px"></div>
</div></body></html>
